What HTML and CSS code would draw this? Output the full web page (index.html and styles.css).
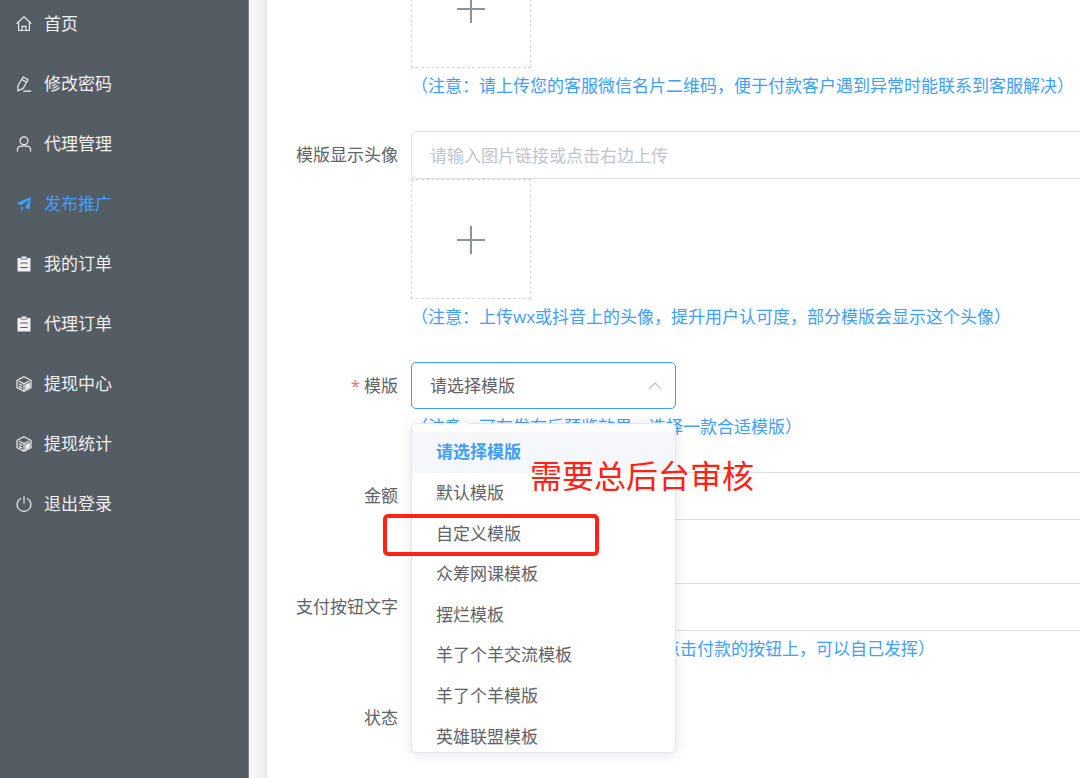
FILE: index.html
```html
<!DOCTYPE html>
<html lang="zh-CN">
<head>
<meta charset="utf-8">
<title>发布推广</title>
<link rel="stylesheet" href="styles.css">
</head>
<body>
<svg class="symbols" aria-hidden="true">
  <symbol id="i-home" viewBox="0 0 16 16"><path d="M.6 7.600 8 .9l7.400 6.700M2.600 6v8.500h10.800V6M6 14.500v-4.200h4v4.200"/></symbol>
  <symbol id="i-edit" viewBox="0 0 16 16"><path d="M7.200 1 12 3.700 7.200 12.200 2 14.900 1.800 9.800zM5.800 3.500l4.800 2.800M7.200 15.100h8"/></symbol>
  <symbol id="i-user" viewBox="0 0 16 16"><circle cx="8" cy="4.800" r="3.900"/><path d="M1.400 15.500v-1.400q0-3.900 3.900-3.900h5.400q3.900 0 3.900 3.900v1.400"/></symbol>
  <symbol id="i-send" viewBox="0 0 16 16"><path class="solid" d="M.4 7.200 15 .8l-1.600 12.800-4.200-1.700L13 3.700 5 9.600zM5.200 10.600l2.600 1.200-2.400 3.700z"/></symbol>
  <symbol id="i-order" viewBox="0 0 16 16"><path class="solid" fill-rule="evenodd" d="M1.500 2H5v1.500h6V2h3.500v13.500h-13zM4.300 6.500v1h7.400v-1zm0 4.500v1h7.400v-1zM5.500.5h5v2.300h-5z"/></symbol>
  <symbol id="i-box" viewBox="0 0 16 16"><path d="M8 .7 15 4.300v7.400L8 15.300 1 11.700V4.300zM2.800 5 8 7.700 13.200 5M8 7.700v6.800M2.800 7.800l3.400 1.700M2.800 10.400l3.400 1.700"/><path class="solid" d="m9.300 8.700 4.600-2.300v5L9.300 13.700z"/></symbol>
  <symbol id="i-power" viewBox="0 0 16 16"><path d="M5.200 2.200a6.900 6.900 0 1 0 5.600 0M8 .2v7.300"/></symbol>
</svg>
<div class="layout">
  <nav class="sidebar">
    <ul class="menu">
      <li><a class="menu-link" href="#home"><svg class="icon"><use href="#i-home"/></svg>首页</a></li>
      <li><a class="menu-link" href="#password"><svg class="icon"><use href="#i-edit"/></svg>修改密码</a></li>
      <li><a class="menu-link" href="#agents"><svg class="icon"><use href="#i-user"/></svg>代理管理</a></li>
      <li><a class="menu-link active" href="#publish"><svg class="icon"><use href="#i-send"/></svg>发布推广</a></li>
      <li><a class="menu-link" href="#orders"><svg class="icon"><use href="#i-order"/></svg>我的订单</a></li>
      <li><a class="menu-link" href="#agent-orders"><svg class="icon"><use href="#i-order"/></svg>代理订单</a></li>
      <li><a class="menu-link" href="#withdraw"><svg class="icon"><use href="#i-box"/></svg>提现中心</a></li>
      <li><a class="menu-link" href="#stats"><svg class="icon"><use href="#i-box"/></svg>提现统计</a></li>
      <li><a class="menu-link" href="#logout"><svg class="icon"><use href="#i-power"/></svg>退出登录</a></li>
    </ul>
  </nav>
  <main class="content">
    <form class="form">
      <div class="row">
        <span class="label"></span>
        <div class="field">
          <button class="upload" type="button" aria-label="上传二维码"><svg class="plus" viewBox="0 0 28 28"><path d="M14 0v28M0 14h28"/></svg></button>
          <p class="note">&#65288;注意&#65306;请上传您的客服微信名片二维码&#65292;便于付款客户遇到异常时能联系到客服解决&#65289;</p>
        </div>
      </div>
      <div class="row">
        <label class="label" for="avatar">模版显示头像</label>
        <div class="field">
          <input class="control" id="avatar" type="text" placeholder="请输入图片链接或点击右边上传">
          <button class="upload" type="button" aria-label="上传头像"><svg class="plus" viewBox="0 0 28 28"><path d="M14 0v28M0 14h28"/></svg></button>
          <p class="note">&#65288;注意&#65306;上传wx或抖音上的头像&#65292;提升用户认可度&#65292;部分模版会显示这个头像&#65289;</p>
        </div>
      </div>
      <div class="row">
        <label class="label required" for="template">模版</label>
        <div class="field">
          <div class="select">
            <select class="control select-control" id="template"><option>请选择模版</option></select>
            <svg class="chevron" viewBox="0 0 14 8"><path d="m1 7 6-6 6 6"/></svg>
            <div class="dropdown">
              <div class="dropdown-view">
                <div class="options">
                  <button class="option selected" type="button">请选择模版</button>
                  <button class="option" type="button">默认模版</button>
                  <button class="option" type="button">自定义模版</button>
                  <button class="option" type="button">众筹网课模板</button>
                  <button class="option" type="button">摆烂模板</button>
                  <button class="option" type="button">羊了个羊交流模板</button>
                  <button class="option" type="button">羊了个羊模版</button>
                  <button class="option" type="button">英雄联盟模板</button>
                </div>
              </div>
            </div>
            <span class="callout-text">需要总后台审核</span>
            <span class="callout-box"></span>
          </div>
          <p class="note">&#65288;注意&#65306;可在发布后预览效果&#65292;选择一款合适模版&#65289;</p>
        </div>
      </div>
      <div class="row">
        <label class="label" for="amount">金额</label>
        <div class="field">
          <input class="control" id="amount" type="text">
          <p class="note"></p>
        </div>
      </div>
      <div class="row">
        <label class="label" for="pay-text">支付按钮文字</label>
        <div class="field">
          <input class="control" id="pay-text" type="text">
          <p class="note note-indent">点击付款的按钮上&#65292;可以自己发挥&#65289;</p>
        </div>
      </div>
      <div class="row">
        <span class="label">状态</span>
        <div class="field"></div>
      </div>
    </form>
  </main>
</div>
</body>
</html>
```
FILE: styles.css
```css
* {
  box-sizing: border-box;
}

body {
  margin: 0;
  height: 100vh;
  overflow: hidden;
  background: #fff;
  color: #606266;
  font: 17px/24px "Open Sans", "Noto Sans CJK SC", sans-serif;
}

button,
input,
select {
  font: inherit;
  color: inherit;
}

.symbols {
  position: absolute;
  width: 0;
  height: 0;
}

.layout {
  display: flex;
  height: 100vh;
}

.sidebar {
  flex: 0 0 249px;
  background: #545c64;
  border-right: 1px solid #7b8187;
}

.menu {
  margin: -6px 0 0;
  padding: 0;
  list-style: none;
}

.menu-link {
  display: flex;
  align-items: center;
  gap: 12px;
  height: 60px;
  padding-left: 16px;
  color: #f0f0f0;
  text-decoration: none;
}

.menu-link.active {
  color: #409eff;
}

.icon {
  width: 16px;
  height: 16px;
  fill: none;
  stroke: currentColor;
  stroke-width: 1.2;
}

.solid {
  fill: currentColor;
  stroke: none;
}

.content {
  flex: 1;
  min-width: 0;
  padding-left: 18px;
  background: linear-gradient(to right, #f8f8f8, #f5f5f5 8px, #ebebed 18px, #fff 18px);
}

.form {
  display: flex;
  flex-direction: column;
  gap: 28px;
  width: calc(100% + 24px);
  margin-top: -52px;
}

.row {
  display: flex;
  gap: 13px;
}

.label {
  flex: 0 0 131px;
  line-height: 48px;
  text-align: right;
}

.required::before {
  content: "*";
  margin-right: 4px;
  color: #f56c6c;
}

.field {
  flex: 1;
  min-width: 0;
}

.control {
  display: block;
  width: 100%;
  height: 48px;
  padding: 0 18px;
  border: 1px solid #dcdfe6;
  border-radius: 5px;
  background: #fff;
}

.control::placeholder {
  color: #c0c4cc;
  opacity: 1;
}

.upload {
  display: flex;
  align-items: center;
  justify-content: center;
  width: 120px;
  height: 120px;
  padding: 2px 0 0;
  border: 1px dashed #d9d9d9;
  background: #fff;
}

.plus {
  width: 28px;
  height: 28px;
  fill: none;
  stroke: #8c939d;
  stroke-width: 2;
}

.note {
  min-height: 35px;
  margin: 0;
  color: #409eff;
  line-height: 35px;
  white-space: nowrap;
}

.note-indent {
  padding-left: 252px;
}

.select {
  position: relative;
  width: 265px;
}

.select-control {
  height: 47px;
  appearance: none;
  border-color: #409eff;
}

.chevron {
  position: absolute;
  top: 20px;
  right: 14px;
  width: 14px;
  height: 8px;
  fill: none;
  stroke: #c0c4cc;
  stroke-width: 1.3;
}

.dropdown {
  position: absolute;
  z-index: 1;
  top: 61px;
  left: 0;
  width: 100%;
  padding-top: 8px;
  border: 1px solid #e4e7ed;
  border-radius: 5px;
  background: #fff;
  box-shadow: 0 2px 14px rgba(0, 0, 0, 0.1);
}

.dropdown::before {
  content: "";
  position: absolute;
  top: -5px;
  left: 45px;
  width: 10px;
  height: 10px;
  border: 1px solid #ebeef5;
  border-right: 0;
  border-bottom: 0;
  background: linear-gradient(135deg, #fff 50%, transparent 50%);
  transform: rotate(45deg);
}

.dropdown-view {
  height: 320px;
  overflow: hidden;
}

.options {
  display: grid;
  grid-auto-rows: 1fr;
  height: 325px;
}

.option {
  padding: 0 24px;
  border: 0;
  background: transparent;
  text-align: left;
}

.option.selected {
  background: #f5f7fa;
  color: #409eff;
  font-weight: 700;
}

.callout-text {
  position: absolute;
  z-index: 2;
  top: 94px;
  left: 119px;
  color: #ff2315;
  font-size: 32px;
  line-height: 40px;
  white-space: nowrap;
}

.callout-box {
  position: absolute;
  z-index: 2;
  top: 152px;
  left: -28px;
  width: 216px;
  height: 42px;
  border: 4px solid #ff2315;
  border-radius: 5px;
}
```
